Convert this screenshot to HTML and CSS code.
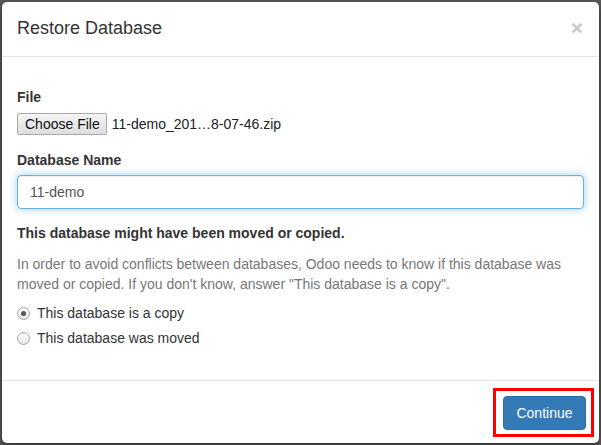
FILE: index.html
```html
<!DOCTYPE html>
<html lang="en">
<head>
    <meta charset="UTF-8">
    <meta name="viewport" content="width=device-width, initial-scale=1.0">
    <title>Restore Database</title>
    <link rel="stylesheet" href="styles.css">
</head>
<body>
    <div class="backdrop">
        <div class="modal">
            <div class="modal-header">
                <h4 class="modal-title">Restore Database</h4>
                <span class="close">&times;</span>
            </div>

            <div class="modal-body">
                <div class="form-group">
                    <label class="control-label">File</label>
                    <div class="file-row">
                        <span class="file-btn">Choose File</span>
                        <span class="file-name">11-demo_201…8-07-46.zip</span>
                    </div>
                </div>

                <div class="form-group">
                    <label class="control-label" for="restore_db_name">Database Name</label>
                    <input type="text" id="restore_db_name" class="form-control" value="11-demo">
                </div>

                <h5 class="copy-title">This database might have been moved or copied.</h5>
                <p class="text-muted">In order to avoid conflicts between databases, Odoo needs to know if this database was moved or copied. If you don't know, answer "This database is a copy".</p>

                <div class="radio">
                    <span class="radio-dot checked"></span>
                    <span>This database is a copy</span>
                </div>
                <div class="radio">
                    <span class="radio-dot"></span>
                    <span>This database was moved</span>
                </div>
            </div>

            <div class="modal-footer">
                <span class="highlight">
                    <button class="btn-primary">Continue</button>
                </span>
            </div>
        </div>
    </div>
</body>
</html>
```

FILE: styles.css
```css
* {
    margin: 0;
    padding: 0;
    box-sizing: border-box;
}

body {
    font-family: "Liberation Sans", Arial, sans-serif;
    font-size: 14px;
    line-height: 20px;
    color: #333;
    background: #5a5a5a;
}

.backdrop {
    height: 445px;
    padding: 2px 2px 0 2px;
}

.modal {
    background: #fff;
    border-radius: 5px;
    width: 597px;
    box-shadow: 0 3px 9px rgba(0, 0, 0, 0.5);
}

.modal-header {
    display: flex;
    justify-content: space-between;
    align-items: flex-start;
    padding: 14px 15px 15px 15px;
    border-bottom: 1px solid #e5e5e5;
}

.modal-title {
    font-size: 18px;
    font-weight: normal;
    line-height: 25px;
    color: #333;
}

.close {
    font-size: 21px;
    font-weight: bold;
    line-height: 21px;
    color: #c8c8c8;
    margin-top: 1px;
    margin-right: 1px;
}

.modal-body {
    padding: 30px 15px 27px 15px;
}

.form-group {
    margin-bottom: 15px;
}

.control-label {
    display: block;
    font-weight: bold;
    margin-bottom: 5px;
}

.file-row {
    display: flex;
    align-items: center;
    height: 23px;
}

.file-btn {
    display: inline-block;
    height: 22px;
    line-height: 20px;
    padding: 0 6px 0 7px;
    border: 1px solid #a9a9a9;
    border-radius: 2px;
    background: linear-gradient(#f4f4f4, #dedede);
    color: #111;
}

.file-name {
    margin-left: 5px;
    color: #222;
}

.form-control {
    display: block;
    width: 100%;
    height: 34px;
    padding: 6px 12px;
    font-family: inherit;
    font-size: 14px;
    color: #555;
    border: 1px solid #66afe9;
    border-radius: 4px;
    outline: 0;
    box-shadow: inset 0 1px 1px rgba(0, 0, 0, 0.075), 0 0 8px rgba(102, 175, 233, 0.6);
}

.copy-title {
    font-size: 14px;
    font-weight: bold;
    margin-top: -1px;
    margin-bottom: 11px;
}

.text-muted {
    color: #777;
    margin-bottom: 9px;
}

.radio {
    display: flex;
    align-items: center;
    margin-bottom: 5px;
}

.radio-dot {
    width: 13px;
    height: 13px;
    border-radius: 50%;
    border: 1px solid #a6a6a6;
    background: linear-gradient(#fdfdfd, #e6e6e6);
    margin: 0 7px 0 0;
    position: relative;
}

.radio-dot.checked::after {
    content: "";
    position: absolute;
    top: 3px;
    left: 3px;
    width: 5px;
    height: 5px;
    border-radius: 50%;
    background: #555;
}

.modal-footer {
    display: flex;
    justify-content: flex-end;
    padding: 7px 5px 6px 15px;
    border-top: 1px solid #e5e5e5;
}

.highlight {
    display: block;
    border: 3px solid #f00;
    padding: 5px 5px 4px 7px;
}

.btn-primary {
    display: block;
    height: 34px;
    width: 83px;
    font-family: inherit;
    font-size: 14px;
    color: #fff;
    background: #337ab7;
    border: 1px solid #2e6da4;
    border-radius: 4px;
}
```
